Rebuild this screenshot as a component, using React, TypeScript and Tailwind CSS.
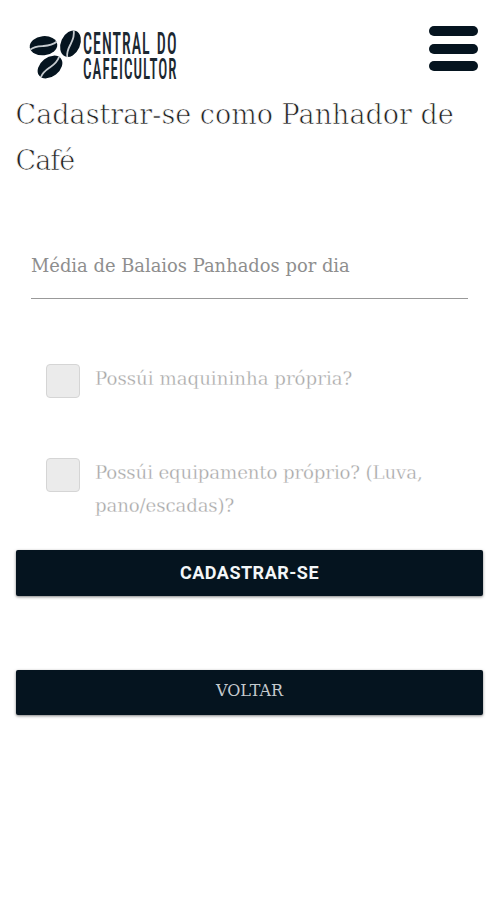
import clsx from 'clsx';

const SERIF = "font-['DejaVu_Serif',serif] font-light";

// Brand mark: three coffee beans next to the narrow two-line name
function Logo() {
  return (
    <svg width="152" height="60" viewBox="28 28 152 60" className="overflow-visible" role="img" aria-label="Central do Cafeicultor">
      <Bean cx={43.5} cy={45.7} angle={-6} />
      <Bean cx={70.5} cy={43.7} angle={-66} />
      <Bean cx={50} cy={67} angle={-38} />
      <g fill="#1c2831" fontFamily="Roboto, sans-serif" fontWeight="500" letterSpacing="2" style={{ fontStretch: '75%' }}>
        <text x="83" y="54.3" fontSize="32" wordSpacing="3" textLength="94.5" lengthAdjust="spacingAndGlyphs">CENTRAL DO</text>
        <text x="83" y="78.5" fontSize="30" textLength="94.5" lengthAdjust="spacingAndGlyphs">CAFEICULTOR</text>
      </g>
    </svg>
  );
}

function Bean({ cx, cy, angle }: { cx: number; cy: number; angle: number }) {
  return (
    <g transform={`translate(${cx} ${cy}) rotate(${angle})`}>
      <ellipse rx="13.8" ry="9.6" fill="#05141f" />
      <path d="M-13.5 2.5C-9 -0.5 -5 0 0 0.3S9 0.5 13.5 -2.5" fill="none" stroke="#c6cbcf" strokeWidth="1.8" />
    </g>
  );
}

function CheckField({ label, className }: { label: string; className?: string }) {
  return (
    <label className={clsx('flex items-start pl-[46px]', className)}>
      <span className="mt-[2px] size-[34px] shrink-0 rounded-[4px] border border-[#d5d5d5] bg-[#ebebeb]" />
      <span className="ml-[15px] w-[350px] text-[18.2px] leading-[33px] text-[#a6a6a6] [-webkit-text-stroke:0.3px_white]">{label}</span>
    </label>
  );
}

export default function App() {
  return (
    <main className={clsx('min-h-[900px] w-full overflow-hidden bg-white', SERIF)}>
      <header className="flex h-[92px] items-start justify-between pl-7 pr-4">
        <div className="pt-7"><Logo /></div>
        <button aria-label="Menu" className="mt-[26px] flex w-[49px] flex-col gap-[7.5px]">
          <span className="h-[10px] w-full rounded-full bg-[#05141f]" />
          <span className="h-[10px] w-full rounded-full bg-[#05141f]" />
          <span className="h-[10px] w-full rounded-full bg-[#05141f]" />
        </button>
      </header>

      <h1 className="h-[92px] pl-[15.5px] text-[27px] leading-[46px] text-[#222] [-webkit-text-stroke:0.7px_white]">
        <span className="block whitespace-nowrap">Cadastrar-se como Panhador de</span>
        <span className="block tracking-[-1px]">Café</span>
      </h1>

      <form>
        <div className="ml-[31px] mr-[26px] mt-[65px] h-[50px] border-b border-[#999]">
          <label className="block whitespace-nowrap text-[17.9px] leading-[34px] text-[#8e8e8e]">Média de Balaios Panhados por dia</label>
        </div>

        <CheckField label="Possúi maquininha própria?" className="mt-[63px]" />
        <CheckField label="Possúi equipamento próprio? (Luva, pano/escadas)?" className="mt-[58px] tracking-[-0.14px]" />

        <div className="ml-4 mr-[11px] mt-[28px]">
          <button type="button" className="block h-[46px] w-full rounded-[2px] bg-[#05141f] pb-[2px] font-[Roboto,sans-serif] text-[18px] font-bold tracking-[0.5px] text-[#f3f6f8] shadow-[0_1px_3px_rgba(0,0,0,0.5)]">
            CADASTRAR-SE
          </button>
          <button type="button" className="mt-[74px] block h-[45px] w-full rounded-[2px] bg-[#05141f] pb-[3px] text-[16px] text-[#c5cace] shadow-[0_1px_3px_rgba(0,0,0,0.5)]">
            VOLTAR
          </button>
        </div>
      </form>
    </main>
  );
}
